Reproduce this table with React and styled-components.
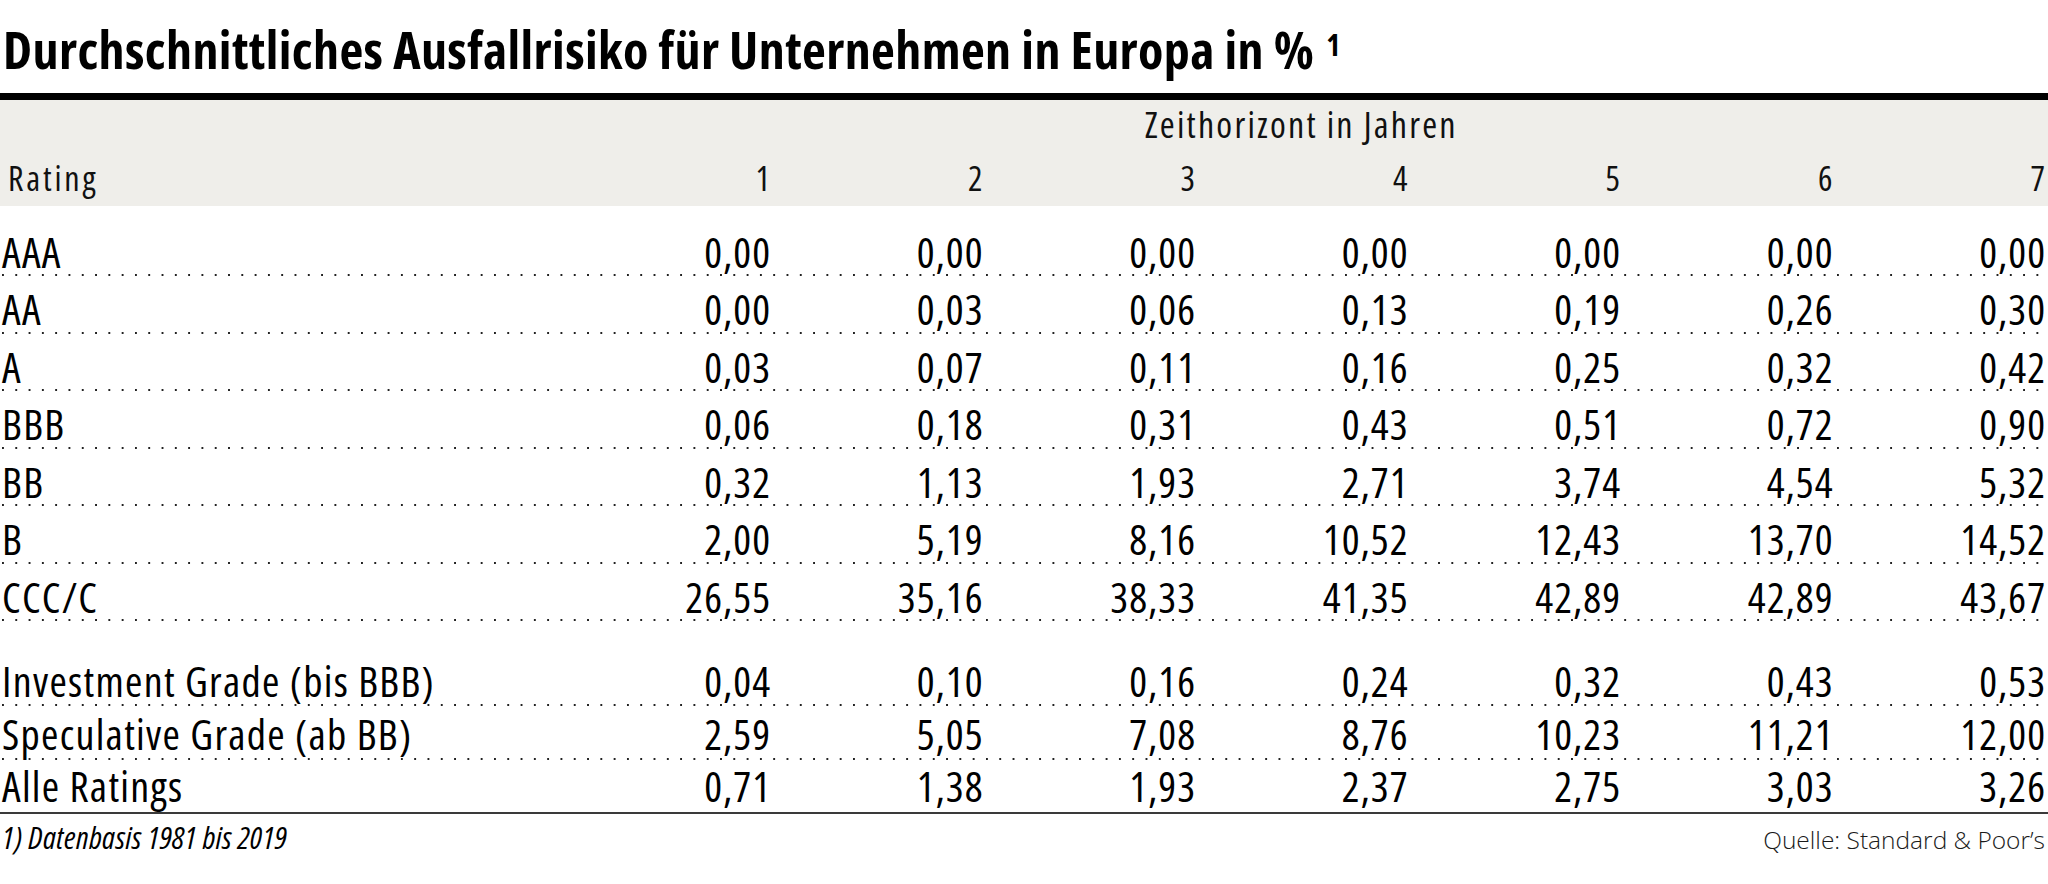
import React from "react";
import styled, { createGlobalStyle } from "styled-components";

const GlobalStyle = createGlobalStyle`
  html, body {
    margin: 0;
    padding: 0;
    background: #fff;
  }
  body {
    font-family: "Open Sans", "Noto Sans", sans-serif;
    font-stretch: 75%;
    color: #111;
  }
`;

const COL_W = "212.5px";

const Page = styled.div`
  width: 2048px;
`;

const Title = styled.h1`
  margin: 0;
  padding: 15px 0 14px 3px;
  font-size: 52px;
  line-height: 60px;
  font-weight: 700;
  letter-spacing: 0.4px;
  color: #000;
  white-space: nowrap;
`;

const Sup = styled.span`
  font-size: 30px;
  margin-left: 12px;
  vertical-align: 13px;
`;

const Head = styled.div`
  border-top: 7px solid #000;
  background: #efeeea;
  padding: 7px 3px 9px 0;
  height: 113px;
  box-sizing: border-box;
`;

const HeadGroup = styled.div`
  display: grid;
  grid-template-columns: 1fr repeat(7, ${COL_W});
  font-size: 36px;
  line-height: 36px;
  letter-spacing: 2.2px;
`;

const Span = styled.div`
  grid-column: 2 / span 7;
  text-align: center;
`;

const HeadRow = styled.div`
  display: grid;
  grid-template-columns: 1fr repeat(7, ${COL_W});
  margin-top: 17px;
  font-size: 34px;
  line-height: 36px;
`;

const HeadLabel = styled.div`
  padding-left: 8px;
  letter-spacing: 2.8px;
`;

const Num = styled.div`
  text-align: right;
  letter-spacing: ${(p) => p.$ls || 0}px;
  margin-right: -${(p) => p.$ls || 0}px;
`;

const Body = styled.div`
  padding-top: ${(p) => p.$top}px;
`;

const Row = styled.div`
  display: grid;
  grid-template-columns: 1fr repeat(7, ${COL_W});
  align-items: end;
  box-sizing: border-box;
  height: ${(p) => p.$h}px;
  padding: 0 3px ${(p) => p.$pb}px 2px;
  font-size: 42px;
  line-height: 40px;
  color: #000;
  background-image: ${(p) =>
    p.$last
      ? "none"
      : "linear-gradient(to right, #222 2.2px, transparent 2.2px)"};
  background-size: 13.3px 2.2px;
  background-repeat: repeat-x;
  background-position: 2px 100%;
  border-bottom: ${(p) => (p.$last ? "2px solid #3a3a3a" : "none")};
`;

const Label = styled.div`
  white-space: nowrap;
  letter-spacing: 1.3px;
`;

const Footer = styled.div`
  display: flex;
  justify-content: space-between;
  align-items: baseline;
  padding: 3px 3px 0 2px;
`;

const Note = styled.div`
  font-style: italic;
  font-size: 31px;
  line-height: 40px;
  letter-spacing: 0.4px;
  color: #000;
`;

const Source = styled.div`
  font-size: 24.5px;
  line-height: 40px;
  font-weight: 300;
  font-stretch: 100%;
  color: #1a1a1a;
`;

const years = [1, 2, 3, 4, 5, 6, 7];

const ratings = [
  ["AAA", ["0,00", "0,00", "0,00", "0,00", "0,00", "0,00", "0,00"]],
  ["AA", ["0,00", "0,03", "0,06", "0,13", "0,19", "0,26", "0,30"]],
  ["A", ["0,03", "0,07", "0,11", "0,16", "0,25", "0,32", "0,42"]],
  ["BBB", ["0,06", "0,18", "0,31", "0,43", "0,51", "0,72", "0,90"]],
  ["BB", ["0,32", "1,13", "1,93", "2,71", "3,74", "4,54", "5,32"]],
  ["B", ["2,00", "5,19", "8,16", "10,52", "12,43", "13,70", "14,52"]],
  ["CCC/C", ["26,55", "35,16", "38,33", "41,35", "42,89", "42,89", "43,67"]],
];

const grades = [
  [
    "Investment Grade (bis BBB)",
    ["0,04", "0,10", "0,16", "0,24", "0,32", "0,43", "0,53"],
  ],
  [
    "Speculative Grade (ab BB)",
    ["2,59", "5,05", "7,08", "8,76", "10,23", "11,21", "12,00"],
  ],
  ["Alle Ratings", ["0,71", "1,38", "1,93", "2,37", "2,75", "3,03", "3,26"]],
];

const DataRow = ({ label, values, h, pb, last }) => (
  <Row $h={h} $pb={pb} $last={last}>
    <Label>{label}</Label>
    {values.map((v, i) => (
      <Num key={i} $ls={1}>
        {v}
      </Num>
    ))}
  </Row>
);

export default function App() {
  return (
    <Page>
      <GlobalStyle />
      <Title>
        Durchschnittliches Ausfallrisiko für Unternehmen in Europa in %
        <Sup>1</Sup>
      </Title>
      <Head>
        <HeadGroup>
          <Span>Zeithorizont in Jahren</Span>
        </HeadGroup>
        <HeadRow>
          <HeadLabel>Rating</HeadLabel>
          {years.map((y) => (
            <Num key={y}>{y}</Num>
          ))}
        </HeadRow>
      </Head>
      <Body $top={13}>
        {ratings.map(([label, values]) => (
          <DataRow key={label} label={label} values={values} h={57.5} pb={5} />
        ))}
      </Body>
      <Body $top={31.5}>
        {grades.map(([label, values], i) => (
          <DataRow
            key={label}
            label={label}
            values={values}
            h={53.5}
            pb={6}
            last={i === grades.length - 1}
          />
        ))}
      </Body>
      <Footer>
        <Note>1) Datenbasis 1981 bis 2019</Note>
        <Source>Quelle: Standard &amp; Poor’s</Source>
      </Footer>
    </Page>
  );
}
